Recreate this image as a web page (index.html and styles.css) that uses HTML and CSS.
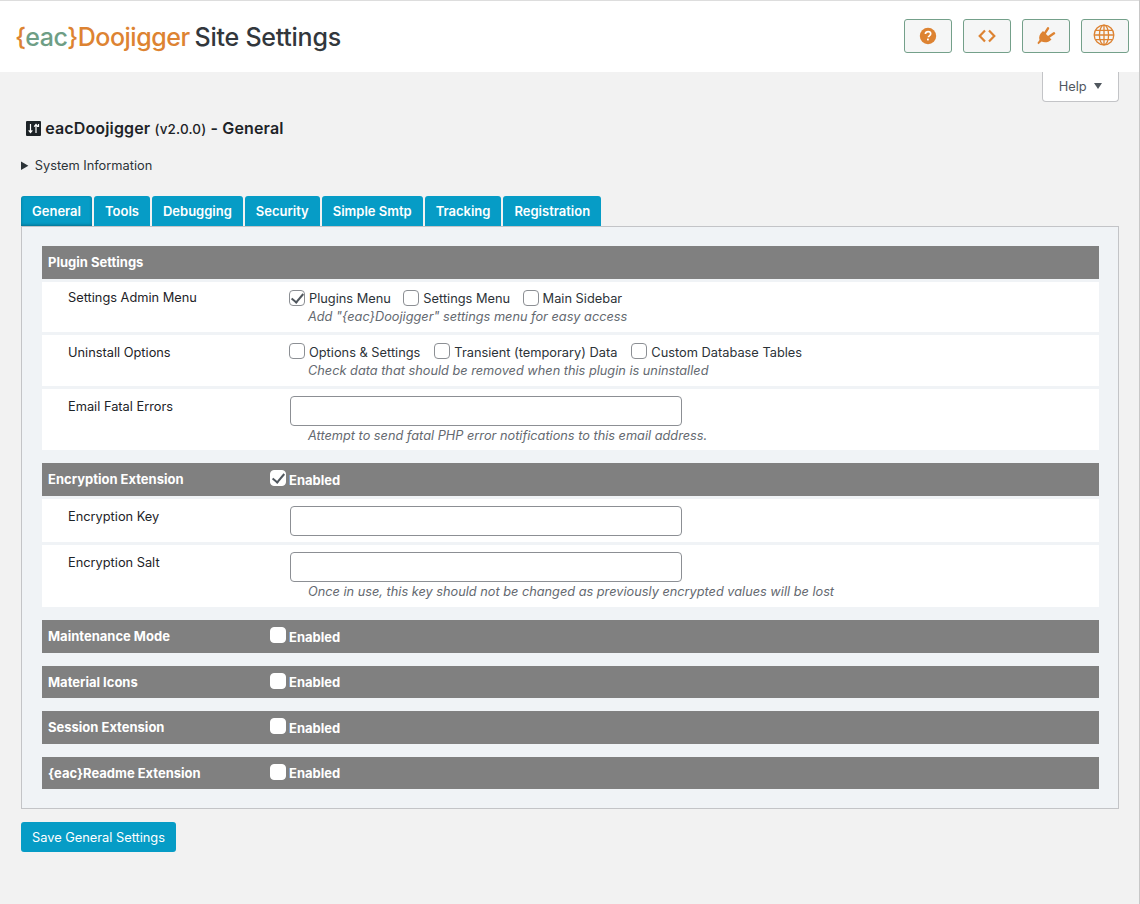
FILE: index.html
```html
<!DOCTYPE html>
<html lang="en">
<head>
    <meta charset="UTF-8">
    <meta name="viewport" content="width=device-width, initial-scale=1.0">
    <title>{eac}Doojigger Site Settings</title>
    <link rel="stylesheet" href="styles.css">
</head>
<body>
    <!-- Top bar -->
    <header class="topbar">
        <h1 class="brand"><span class="brand-mark">{<span class="brand-eac">eac</span>}Doojigger</span> Site Settings</h1>
        <nav class="topbar-buttons">
            <a class="icon-btn" href="#">
                <svg width="18" height="18" viewBox="0 0 18 18"><circle cx="9" cy="9" r="8.2" fill="#dd8332"/><path d="M6.4 7.1c0-1.6 1.2-2.5 2.7-2.5s2.6.9 2.6 2.2c0 1.1-.6 1.6-1.4 2.1-.7.4-.9.7-.9 1.4" fill="none" stroke="#fff" stroke-width="1.7"/><rect x="8" y="11.6" width="1.8" height="1.8" fill="#fff"/></svg>
            </a>
            <a class="icon-btn" href="#">
                <svg width="18" height="14" viewBox="0 0 18 14"><path d="M7 1.5 1.7 7 7 12.5M11 1.5 16.3 7 11 12.5" fill="none" stroke="#dd8332" stroke-width="2.2"/></svg>
            </a>
            <a class="icon-btn" href="#">
                <svg width="19" height="18" viewBox="0 0 19 18"><path d="M6 4 14.5 12.500C11.500 15.500 7.500 16 4.500 14.500L1.500 17.200.4 16 2.500 13C1.500 10 2.500 7 6 4z" fill="#dd8332"/><path d="M11 1.300 7.800 6.300M17 6.300 12 9.700" fill="none" stroke="#dd8332" stroke-width="2.400" stroke-linecap="round"/></svg>
            </a>
            <a class="icon-btn" href="#">
                <svg class="globe" width="22" height="22" viewBox="0 0 22 22" fill="none" stroke="#dd8332" stroke-width="1.300"><circle cx="11" cy="11" r="9.800"/><ellipse cx="11" cy="11" rx="4.600" ry="9.800"/><path d="M11 1.200v19.600M1.200 11h19.600M2.600 6.400h16.800M2.600 15.600h16.800"/></svg>
            </a>
        </nav>
    </header>

    <div class="wrap">
        <div class="help-row"><button class="help-tab" type="button">Help <span class="caret"></span></button></div>

        <h2 class="page-title">
            <svg class="title-icon" width="15" height="15" viewBox="0 0 15 15"><rect width="15" height="15" rx="1" fill="#1d2327"/><path d="M4.500 3v8M2.700 9.300l1.800 2.200 1.800-2.200M10 12V4M8.200 5.700 10 3.500l1.800 2.200M12.500 3v3" fill="none" stroke="#fff" stroke-width="1.200"/></svg>
            eacDoojigger <small>(v2.0.0)</small> - General
        </h2>

        <details class="sysinfo"><summary>System Information</summary></details>

        <!-- Tabs -->
        <div class="tabs">
            <a class="tab active" href="#">General</a>
            <a class="tab" href="#">Tools</a>
            <a class="tab" href="#">Debugging</a>
            <a class="tab" href="#">Security</a>
            <a class="tab" href="#">Simple Smtp</a>
            <a class="tab" href="#">Tracking</a>
            <a class="tab" href="#">Registration</a>
        </div>

        <form class="panel">
            <!-- Plugin Settings -->
            <section>
                <h3 class="group-head">Plugin Settings</h3>
                <div class="row row-a">
                    <div class="row-label">Settings Admin Menu</div>
                    <div class="row-field">
                        <div class="checks">
                            <label><input type="checkbox" checked>Plugins Menu</label>
                            <label><input type="checkbox">Settings Menu</label>
                            <label><input type="checkbox">Main Sidebar</label>
                        </div>
                        <p class="hint">Add "{eac}Doojigger" settings menu for easy access</p>
                    </div>
                </div>
                <div class="row row-b">
                    <div class="row-label">Uninstall Options</div>
                    <div class="row-field">
                        <div class="checks">
                            <label><input type="checkbox">Options &amp; Settings</label>
                            <label><input type="checkbox">Transient (temporary) Data</label>
                            <label><input type="checkbox">Custom Database Tables</label>
                        </div>
                        <p class="hint">Check data that should be removed when this plugin is uninstalled</p>
                    </div>
                </div>
                <div class="row row-c">
                    <div class="row-label">Email Fatal Errors</div>
                    <div class="row-field">
                        <input class="text-input" type="text">
                        <p class="hint">Attempt to send fatal PHP error notifications to this email address.</p>
                    </div>
                </div>
            </section>

            <!-- Encryption -->
            <section>
                <h3 class="group-head"><span class="head-title">Encryption Extension</span><label class="head-check"><input type="checkbox" checked>Enabled</label></h3>
                <div class="row row-d">
                    <div class="row-label">Encryption Key</div>
                    <div class="row-field"><input class="text-input" type="text"></div>
                </div>
                <div class="row row-e">
                    <div class="row-label">Encryption Salt</div>
                    <div class="row-field">
                        <input class="text-input" type="text">
                        <p class="hint">Once in use, this key should not be changed as previously encrypted values will be lost</p>
                    </div>
                </div>
            </section>

            <section>
                <h3 class="group-head"><span class="head-title">Maintenance Mode</span><label class="head-check"><input type="checkbox">Enabled</label></h3>
            </section>
            <section>
                <h3 class="group-head"><span class="head-title">Material Icons</span><label class="head-check"><input type="checkbox">Enabled</label></h3>
            </section>
            <section>
                <h3 class="group-head"><span class="head-title">Session Extension</span><label class="head-check"><input type="checkbox">Enabled</label></h3>
            </section>
            <section>
                <h3 class="group-head"><span class="head-title">{eac}Readme Extension</span><label class="head-check"><input type="checkbox">Enabled</label></h3>
            </section>
        </form>

        <button class="save-btn" type="button">Save General Settings</button>
    </div>
</body>
</html>
```

FILE: styles.css
```css
* {
    box-sizing: border-box;
}
html, body {
    height: 100%;
}
body {
    margin: 0;
    background: #f2f2f2;
    color: #2c3338;
    font-family: Inter, "Liberation Sans", sans-serif;
    font-size: 12.8px;
    line-height: 18px;
    border-right: 1px solid #c8c8c8;
}

/* top bar */
.topbar {
    display: flex;
    align-items: center;
    justify-content: space-between;
    height: 72px;
    margin-right: -1px;
    padding: 0 11px 1px 15px;
    background: #fff;
    border-top: 1px solid #ddd;
}
.brand {
    margin: 2px 0 0;
    font-size: 25px;
    line-height: 34px;
    font-weight: 500;
    letter-spacing: -0.25px;
    color: #32373c;
}
.brand-mark {
    margin-right: -1.5px;
    letter-spacing: -0.47px;
    color: #dd8332;
}
.brand-eac {
    color: #6e9e85;
}
.topbar-buttons {
    display: flex;
    gap: 11px;
}
.icon-btn {
    display: flex;
    align-items: center;
    justify-content: center;
    width: 48px;
    height: 34px;
    background: #f5f6f6;
    border: 1px solid #74a08a;
    border-radius: 3px;
}
.globe {
    margin: -3px 3px 0 0;
}

.wrap {
    padding: 0 20px 0 21px;
}

/* help */
.help-row {
    display: flex;
    justify-content: flex-end;
}
.help-tab {
    width: 77px;
    height: 30px;
    padding: 0;
    background: #fff;
    border: 1px solid #c3c4c7;
    border-top: 0;
    border-radius: 0 0 4px 4px;
    color: #50575e;
    font: 12.8px Inter, "Liberation Sans", sans-serif;
}
.caret {
    display: inline-block;
    margin-left: 4px;
    border-style: solid;
    border-width: 6px 4px 0;
    border-color: #50575e transparent transparent;
    vertical-align: 2px;
}

.page-title {
    margin: 16px 0 0 5px;
    font-size: 16px;
    font-weight: 600;
    line-height: 21px;
    letter-spacing: .15px;
    color: #1d2327;
}
.title-icon {
    vertical-align: -2px;
}
.page-title small {
    font-size: 13.5px;
    font-weight: 500;
}
.sysinfo {
    margin-top: 15px;
    line-height: 20px;
}
.sysinfo summary::marker {
    font-size: 13px;
}

/* tabs */
.tabs {
    display: flex;
    gap: 2px;
    margin-top: 20px;
    height: 30px;
}
.tab {
    display: flex;
    align-items: center;
    padding: 0 11px;
    background: #069cc6;
    border-radius: 3px 3px 0 0;
    color: #fff;
    font-size: 13px;
    font-weight: 600;
    text-decoration: none;
}
.tab.active {
    box-shadow: inset 0 -1px 3px rgba(0, 0, 0, .3);
}

/* main panel */
.panel {
    display: flex;
    flex-direction: column;
    gap: 13px;
    height: 583px;
    padding: 19px 19px 0 20px;
    background: #f0f3f6;
    border: 1px solid #c3c4c7;
}
.group-head {
    display: flex;
    align-items: center;
    height: 32.5px;
    margin: 0;
    padding-left: 6px;
    background: #808080;
    color: #fff;
    font-size: 13px;
    font-weight: 700;
}
.head-title {
    width: 222px;
}
.head-check {
    display: flex;
    align-items: center;
    padding-top: 1px;
}
.head-check input[type="checkbox"] {
    margin-right: 3px;
    border-color: #fff;
}
.row {
    display: flex;
    margin-top: 3px;
    padding: 7px 0 0 26px;
    background: #fff;
}
.row-a { height: 50.5px; }
.row-b { height: 51px; padding-top: 8px; }
.row-c { height: 61px; }
.row-d { height: 43px; padding-top: 7.5px; }
.row-e { height: 62.5px; padding-top: 7.5px; }
.row-label {
    width: 222px;
    color: #1d2327;
}
.row-b .row-label {
    padding-top: 1px;
}
.row-c .row-label,
.row-d .row-label,
.row-e .row-label {
    padding-top: 2px;
}
.row-field {
    flex: 1;
}
.checks {
    display: flex;
    gap: 13px;
    margin-left: -1px;
}
.row-a .checks {
    gap: 12.5px;
    margin-top: 1px;
    margin-bottom: -1px;
}
.row-b .checks {
    gap: 14px;
}
.checks label {
    display: flex;
    align-items: center;
}
input[type="checkbox"] {
    appearance: none;
    position: relative;
    width: 16px;
    height: 16px;
    margin: 0 4px 3px 0;
    background: #fff;
    border: 1px solid #8c8f94;
    border-radius: 4px;
}
input[type="checkbox"]:checked::before {
    content: "";
    position: absolute;
    left: 4px;
    top: 0;
    width: 5px;
    height: 10px;
    border: solid #50575e;
    border-width: 0 2px 2px 0;
    transform: rotate(40deg);
}
.hint {
    margin: 0 0 0 18px;
    color: #646970;
    font-size: 12.75px;
    font-style: italic;
}
.text-input {
    display: block;
    width: 392px;
    height: 30px;
    margin-bottom: 1px;
    background: #fff;
    border: 1px solid #8c8f94;
    border-radius: 4px;
}
.save-btn {
    display: block;
    width: 155px;
    height: 30px;
    margin-top: 13px;
    padding: 0;
    background: #069cc6;
    border: 0;
    border-radius: 3px;
    color: #fff;
    font: 12.8px Inter, "Liberation Sans", sans-serif;
}
```
